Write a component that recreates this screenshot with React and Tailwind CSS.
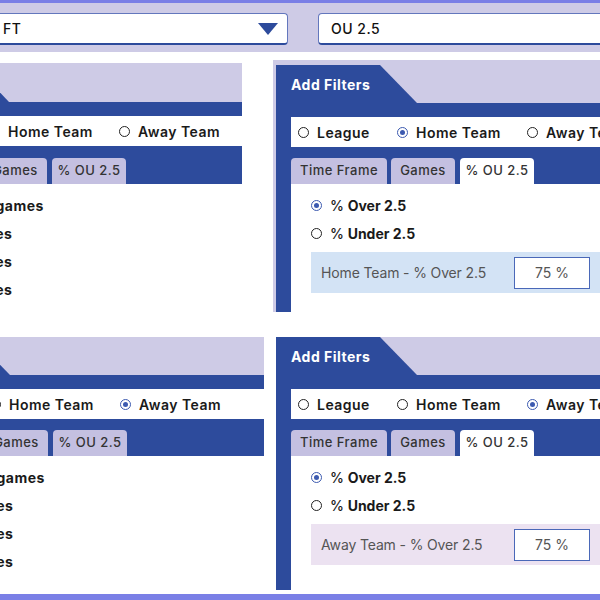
import React from "react";

const BLUE = "bg-[#2d4b9c]";

function Radio({ on }) {
  return on ? (
    <span className="w-[11px] h-[11px] shrink-0 rounded-full border-[1.5px] border-[#3c5ab0] flex items-center justify-center">
      <span className="w-[5px] h-[5px] rounded-full bg-[#3c5ab0]" />
    </span>
  ) : (
    <span className="w-[11px] h-[11px] shrink-0 rounded-full border-[1.5px] border-[#222]" />
  );
}

function Header({ h }) {
  return (
    <div className={`${h} flex bg-[#cecbe6]`}>
      <div
        className={`w-[141px] h-full ${BLUE} flex items-center pl-[15px] text-white font-bold text-[14px]`}
        style={{ clipPath: "polygon(0 0, 104px 0, 141px 100%, 0 100%)" }}
      >
        Add Filters
      </div>
    </div>
  );
}

function RadioRow({ sel }) {
  const items = [
    ["League", "w-[99px]"],
    ["Home Team", "w-[130px]"],
    ["Away Team", "w-[130px]"],
  ];
  return (
    <div className="h-[30px] bg-white flex items-center pl-[7px]">
      {items.map(([t, w], i) => (
        <div key={t} className={`${w} shrink-0 flex items-center gap-[8px]`}>
          <Radio on={sel === i} />
          <span className="text-[14px] font-semibold text-[#1a1a1a] whitespace-nowrap">{t}</span>
        </div>
      ))}
    </div>
  );
}

function Tabs({ active }) {
  const tabs = [
    ["Time Frame", "w-[96px]"],
    ["Games", "w-[64px]"],
    ["% OU 2.5", "w-[74px] ml-[1px]"],
  ];
  return (
    <div className="h-[26px] flex gap-[4px]">
      {tabs.map(([t, w], i) => (
        <div
          key={t}
          className={`${w} shrink-0 h-full rounded-t-[4px] flex items-center justify-center text-[13px] font-medium text-[#333] ${
            active === i ? "bg-white" : "bg-[#c4c0e1]"
          }`}
        >
          {t}
        </div>
      ))}
    </div>
  );
}

function LeftPanel({ ml, w, sel, label, hh, gap }) {
  return (
    <div className={`${ml} ${w} shrink-0 flex flex-col h-full`}>
      <Header h={hh} />
      <div className={`${BLUE} pl-[15px] pt-[14px] flex flex-col`}>
        <RadioRow sel={sel} />
        <div className={gap} />
        <Tabs active={-1} />
      </div>
      <div className="flex-1 bg-white pl-[29px] pt-[7px] flex flex-col">
        {[label, "Last 3 games", "Last 5 games", "Last 8 games"].map((t) => (
          <div key={t} className="h-[28px] flex items-center gap-[8px]">
            <Radio on={false} />
            <span className="text-[14px] font-bold text-[#1a1a1a] whitespace-nowrap">{t}</span>
          </div>
        ))}
      </div>
    </div>
  );
}

function RightPanel({ sel, label, hl }) {
  return (
    <div className="flex-1 flex flex-col h-full min-w-0">
      <Header h="h-[38px]" />
      <div className={`${BLUE} flex-1 pl-[15px] pt-[14px] flex flex-col`}>
        <RadioRow sel={sel} />
        <div className="h-[11px]" />
        <Tabs active={2} />
        <div className="flex-1 bg-white pl-[20px] pt-[7px] flex flex-col">
          <div className="h-[28px] flex items-center gap-[8px]">
            <Radio on={true} />
            <span className="text-[14px] text-[#1a1a1a] whitespace-nowrap tracking-normal">
              <span className="font-medium">% </span>
              <span className="font-bold">Over 2.5</span>
            </span>
          </div>
          <div className="h-[28px] flex items-center gap-[8px]">
            <Radio on={false} />
            <span className="text-[14px] text-[#1a1a1a] whitespace-nowrap tracking-normal">
              <span className="font-medium">% </span>
              <span className="font-bold">Under 2.5</span>
            </span>
          </div>
          <div className={`mt-[5px] h-[41px] ${hl} flex items-center pl-[10px]`}>
            <span className="w-[193px] shrink-0 text-[14px] text-[#555] whitespace-nowrap tracking-[-0.01em]">{label}</span>
            <div className="w-[76px] h-[32px] shrink-0 bg-white border border-[#4a68b8] flex items-center justify-center text-[14px] text-[#555] tracking-normal">
              75 %
            </div>
          </div>
        </div>
      </div>
    </div>
  );
}

export default function App() {
  return (
    <div className="w-[600px] h-[600px] overflow-hidden bg-white flex flex-col font-['Inter',sans-serif] tracking-[0.03em]">
      <div className="h-[3px] bg-[#7a7fe6] shrink-0" />
      <div className="h-[49px] shrink-0 bg-[#cecbe6] flex pt-[10px] gap-[30px]">
        <div className="ml-[-100px] w-[388px] h-[32px] shrink-0 bg-white rounded-[4px] border border-[#6377bd] border-b-2 border-b-[#2d4b9c] flex items-center justify-between pl-[102px] pr-[9px]">
          <span className="text-[14px] font-medium text-[#111]">FT</span>
          <svg width="20" height="12" viewBox="0 0 20 12">
            <polygon points="0,0 20,0 10,12" fill="#2d4b9c" />
          </svg>
        </div>
        <div className="w-[400px] h-[32px] shrink-0 bg-white rounded-[4px] border border-[#6377bd] border-b-2 border-b-[#2d4b9c] flex items-center pl-[12px]">
          <span className="text-[14px] font-medium text-[#111]">OU 2.5</span>
        </div>
      </div>
      <div className="h-[8px] shrink-0" />
      {/* row 1 */}
      <div className="h-[252px] shrink-0 flex">
        <div className="pt-[3px] h-full flex">
          <LeftPanel ml="ml-[-132px]" w="w-[374px]" sel={1} label="All season games" hh="h-[39px]" gap="h-[12px]" />
        </div>
        <div className="ml-[31px] flex-1 min-w-0 bg-[#cecbe6] pl-[3px] pt-[5px] flex flex-col">
          <RightPanel sel={1} label="Home Team - % Over 2.5" hl="bg-[#d3e3f5]" />
        </div>
      </div>
      <div className="h-[25px] shrink-0" />
      {/* row 2 */}
      <div className="h-[253px] shrink-0 flex">
        <LeftPanel ml="ml-[-131px]" w="w-[395px]" sel={2} label="All season games" hh="h-[38px]" gap="h-[11px]" />
        <div className="ml-[12px] flex-1 min-w-0 flex flex-col">
          <RightPanel sel={2} label="Away Team - % Over 2.5" hl="bg-[#ece2f1]" />
        </div>
      </div>
      <div className="h-[4px] shrink-0" />
      <div className="flex-1 bg-[#7a7fe6]" />
    </div>
  );
}
